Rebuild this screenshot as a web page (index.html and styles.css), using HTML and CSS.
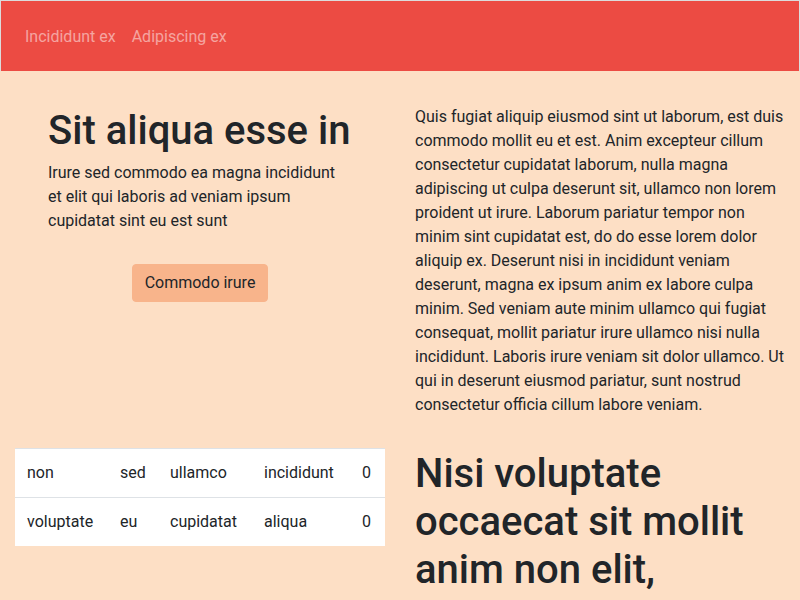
FILE: index.html
```html
<!DOCTYPE html>
<html lang="en">
<head>
<meta charset="utf-8">
<title>Page</title>
<link rel="stylesheet" href="styles.css">
</head>
<body>
<nav class="navbar">
  <a class="nav-link" href="#">Incididunt ex</a>
  <a class="nav-link" href="#">Adipiscing ex</a>
</nav>
<main class="container">
  <div class="row">
    <div class="col">
      <div class="hero">
        <h1 class="title">Sit aliqua esse in</h1>
        <p class="text">Irure sed commodo ea magna incididunt et elit qui laboris ad veniam ipsum cupidatat sint eu est sunt</p>
        <div class="actions"><button class="btn" type="button">Commodo irure</button></div>
      </div>
    </div>
    <div class="col">
      <p class="text">Quis fugiat aliquip eiusmod sint ut laborum, est duis commodo mollit eu et est. Anim excepteur cillum consectetur cupidatat laborum, nulla magna adipiscing ut culpa deserunt sit, ullamco non lorem proident ut irure. Laborum pariatur tempor non minim sint cupidatat est, do do esse lorem dolor aliquip ex. Deserunt nisi in incididunt veniam deserunt, magna ex ipsum anim ex labore culpa minim. Sed veniam aute minim ullamco qui fugiat consequat, mollit pariatur irure ullamco nisi nulla incididunt. Laboris irure veniam sit dolor ullamco. Ut qui in deserunt eiusmod pariatur, sunt nostrud consectetur officia cillum labore veniam.</p>
    </div>
  </div>
  <div class="row row-second">
    <div class="col">
      <table class="table">
        <colgroup>
          <col class="c1"><col class="c2"><col class="c3"><col class="c4"><col class="c5">
        </colgroup>
        <tbody>
          <tr><td>non</td><td>sed</td><td>ullamco</td><td>incididunt</td><td>0</td></tr>
          <tr><td>voluptate</td><td>eu</td><td>cupidatat</td><td>aliqua</td><td>0</td></tr>
        </tbody>
      </table>
    </div>
    <div class="col">
      <h1 class="title">Nisi voluptate occaecat sit mollit anim non elit,</h1>
    </div>
  </div>
</main>
</body>
</html>
```
FILE: styles.css
```css
* { box-sizing: border-box; }
html, body { margin: 0; padding: 0; }
body {
  background: #fddfc5;
  color: #212529;
  font-family: Roboto, "Liberation Sans", sans-serif;
  font-size: 16px;
  line-height: 24px;
  overflow: hidden;
}
.navbar {
  display: flex;
  align-items: center;
  height: 71px;
  padding: 2px 16px 0;
  background: #ec4b43;
  border: 1px solid #dcdcdc;
  border-bottom: 0;
}
.nav-link {
  padding: 0 8px;
  color: rgba(255, 255, 255, 0.5);
  text-decoration: none;
  font-size: 16px;
}
.container {
  padding-top: 34px;
}
.row {
  display: flex;
}
.row-second {
  margin-top: 15px;
}
.col {
  flex: 0 0 50%;
  padding: 0 15px;
}
.hero {
  padding: 0 33px;
}
.title {
  margin: 0 0 6px;
  padding-top: 2px;
  font-size: 40px;
  line-height: 48px;
  font-weight: 500;
}
.text {
  margin: 0 0 16px;
}
.actions {
  margin-top: 31px;
  text-align: center;
}
.btn {
  display: inline-block;
  height: 38px;
  padding: 6px 12px;
  border: 1px solid #f8b48b;
  border-radius: 4px;
  background: #f8b48b;
  color: #212529;
  font-family: inherit;
  font-size: 16px;
  line-height: 24px;
}
.table {
  width: 100%;
  border-collapse: collapse;
  background: #fff;
  table-layout: fixed;
}
.table td {
  padding: 12px;
  border-top: 1px solid #dee2e6;
  line-height: 24px;
  white-space: nowrap;
}
.c1 { width: 93px; }
.c2 { width: 50px; }
.c3 { width: 94px; }
.c4 { width: 98px; }
.c5 { width: 35px; }
```
